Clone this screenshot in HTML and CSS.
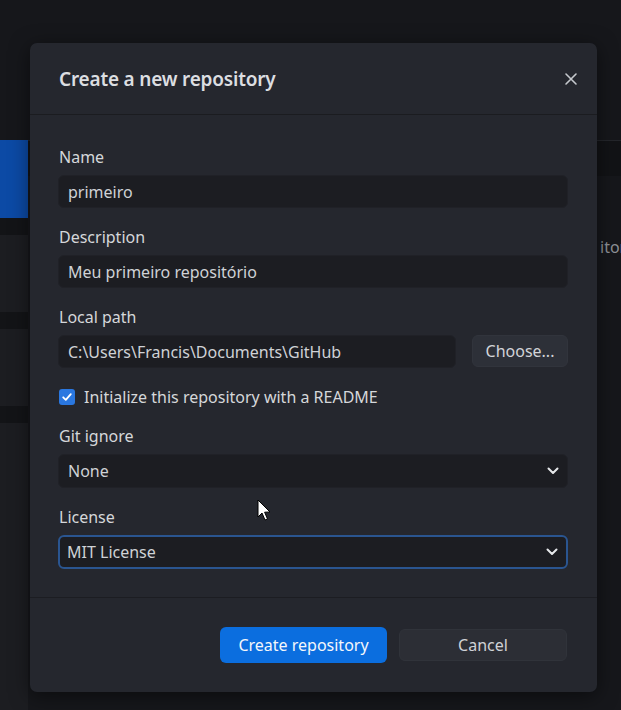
FILE: index.html
```html
<!DOCTYPE html>
<html lang="pt">
<head>
<meta charset="utf-8">
<title>Create a new repository</title>
<link rel="stylesheet" href="styles.css">
</head>
<body>
<div class="app">
  <aside class="side">
    <div class="side-blue"></div>
    <div class="side-band"></div>
    <div class="side-panel"></div>
    <div class="side-band"></div>
    <div class="side-panel"></div>
    <div class="side-band"></div>
    <div class="side-panel side-fill"></div>
  </aside>
  <main class="main">
    <div class="main-band"></div>
    <div class="main-text">itory</div>
  </main>
</div>

<div class="dialog">
  <header class="dlg-header">
    <h1 class="dlg-title">Create a new repository</h1>
    <button class="dlg-close" aria-label="Close">
      <svg width="14" height="14" viewBox="0 0 14 14"><path d="M2 2 L12 12 M12 2 L2 12" stroke="#c5c8cd" stroke-width="1.6" stroke-linecap="round" fill="none"/></svg>
    </button>
  </header>
  <div class="dlg-body">
    <div class="field">
      <label class="lbl">Name</label>
      <div class="input">primeiro</div>
    </div>
    <div class="field">
      <label class="lbl">Description</label>
      <div class="input">Meu primeiro repositório</div>
    </div>
    <div class="field">
      <label class="lbl">Local path</label>
      <div class="path-row">
        <div class="input input-path">C:\Users\Francis\Documents\GitHub</div>
        <button class="btn-choose">Choose...</button>
      </div>
    </div>
    <div class="check-row">
      <span class="checkbox">
        <svg width="12" height="12" viewBox="0 0 12 12"><path d="M2.2 6.3 L4.8 8.8 L9.8 3.2" stroke="#fff" stroke-width="1.8" fill="none" stroke-linecap="round" stroke-linejoin="round"/></svg>
      </span>
      <span class="check-text">Initialize this repository with a README</span>
    </div>
    <div class="field">
      <label class="lbl">Git ignore</label>
      <div class="input select">None<svg class="chev" width="12" height="8" viewBox="0 0 12 8"><path d="M1.5 1.5 L6 6 L10.5 1.5" stroke="#e6e8eb" stroke-width="2" fill="none" stroke-linecap="round" stroke-linejoin="round"/></svg></div>
    </div>
    <div class="field">
      <label class="lbl">License</label>
      <div class="input select select-focus">MIT License<svg class="chev" width="12" height="8" viewBox="0 0 12 8"><path d="M1.5 1.5 L6 6 L10.5 1.5" stroke="#e6e8eb" stroke-width="2" fill="none" stroke-linecap="round" stroke-linejoin="round"/></svg></div>
    </div>
  </div>
  <footer class="dlg-footer">
    <button class="btn-primary">Create repository</button>
    <button class="btn-cancel">Cancel</button>
  </footer>
</div>

<svg class="cursor" width="16" height="24" viewBox="0 0 16 24"><path d="M1 1 L1 18 L5 14 L8 21 L10.5 20 L7.6 13.2 L13 13 Z" fill="#fff" stroke="#000" stroke-width="1"/></svg>
</body>
</html>
```

FILE: styles.css
```css
* { box-sizing: border-box; }
html, body { margin: 0; padding: 0; }
body {
  width: 621px;
  height: 710px;
  overflow: hidden;
  background: #16171b;
  font-family: "Noto Sans", "Open Sans", sans-serif;
  position: relative;
}
.app { display: flex; height: 710px; }
.side { width: 28px; flex-shrink: 0; padding-top: 140px; display: flex; flex-direction: column; }
.side-blue { height: 78px; background: #0c4aa5; }
.side-band { height: 17px; background: #131417; }
.side-panel { height: 77px; background: #1c1d21; }
.side-fill { flex: 1; }
.main { flex: 1; min-width: 0; display: flex; flex-direction: column; padding-top: 140px; background: #16171b; overflow: hidden; }
.main-band { height: 36px; border-top: 1px solid #24262b; background: #121316; }
.main-text {
  margin-top: 60px;
  padding-left: 572px;
  color: #8e9197;
  font-size: 16px;
  white-space: nowrap;
}

.dialog {
  position: absolute;
  left: 30px;
  top: 43px;
  width: 567px;
  height: 649px;
  background: #25272e;
  border-radius: 7px;
  box-shadow: 0 4px 20px rgba(0,0,0,0.5);
  display: flex;
  flex-direction: column;
}
.dlg-header {
  height: 72px;
  display: flex;
  align-items: center;
  justify-content: space-between;
  padding: 0 15px 0 29px;
  border-bottom: 1px solid #1b1c20;
}
.dlg-title {
  margin: 0;
  font-size: 19px;
  font-weight: 600;
  color: #dcdee1;
  letter-spacing: -0.2px;
}
.dlg-close {
  background: none;
  border: 0;
  padding: 4px;
  width: 22px;
  height: 22px;
  display: flex;
  align-items: center;
  justify-content: center;
}
.dlg-body {
  padding: 32px 29px 0 28px;
  display: flex;
  flex-direction: column;
  gap: 19px;
  height: 483px;
  border-bottom: 1px solid #1c1d22;
}
.field { display: flex; flex-direction: column; gap: 8px; }
.lbl {
  font-size: 16px;
  line-height: 20px;
  color: #d5d7da;
  padding-left: 1px;
}
.input {
  height: 33px;
  background: #1c1d22;
  border: 1px solid #202127;
  border-radius: 6px;
  color: #cfd2d6;
  font-size: 16px;
  display: flex;
  align-items: center;
  padding: 0 9px;
}
.path-row { display: flex; gap: 16px; }
.input-path { flex: 1; }
.btn-choose {
  width: 96px;
  height: 32px;
  background: #2d3038;
  border: 1px solid #31343c;
  border-radius: 6px;
  color: #d2d4d8;
  font-family: inherit;
  font-size: 16px;
}
.check-row {
  display: flex;
  align-items: center;
  gap: 9px;
  height: 20px;
  padding-left: 1px;
}
.checkbox {
  width: 16px;
  height: 16px;
  border-radius: 3px;
  background: #2a77e0;
  display: flex;
  align-items: center;
  justify-content: center;
}
.check-text { font-size: 16px; color: #d5d7da; }
.select { height: 34px; justify-content: space-between; padding-right: 8px; }
.select-focus { border: 2px solid #2a5590; padding-left: 7px; }
.chev { display: block; }

.dlg-footer {
  flex: 1;
  display: flex;
  justify-content: flex-end;
  align-items: center;
  gap: 12px;
  padding: 0 30px 0 0;
}
.btn-primary {
  width: 167px;
  height: 36px;
  border: 0;
  border-radius: 6px;
  background: #0b6edf;
  color: #f4f7fb;
  font-family: inherit;
  font-size: 16px;
}
.btn-cancel {
  width: 168px;
  height: 32px;
  border: 1px solid #30333a;
  border-radius: 6px;
  background: #2c2e35;
  color: #d0d2d6;
  font-family: inherit;
  font-size: 16px;
}
.cursor {
  position: absolute;
  left: 257px;
  top: 499px;
}
```
